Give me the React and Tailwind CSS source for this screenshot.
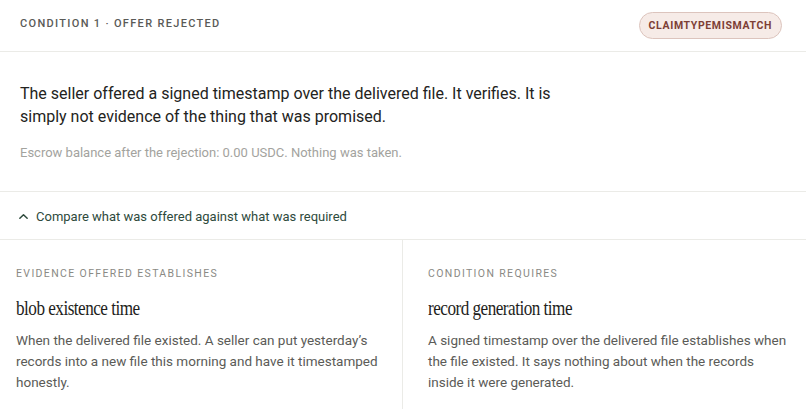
import React from 'react'

const sans = { fontFamily: 'Roboto, "Liberation Sans", sans-serif' }

function Column({ label, title, children, className = '' }) {
  return (
    <div className={`px-4 pt-[26px] pb-5 ${className}`}>
      <p className="text-[10.5px] uppercase tracking-[0.13em] text-[#8a8a85]">{label}</p>
      <h3 className="mt-[12px] whitespace-nowrap font-['Liberation_Serif',serif] text-[22px] leading-[27px] tracking-[-0.03em] text-[#1e1e1c]" style={{ transform: 'scaleX(0.78)', transformOrigin: 'left' }}>
        {title}
      </h3>
      <p className="mt-[9px] text-[13.5px] leading-[21px] text-[#5b5b57]">{children}</p>
    </div>
  )
}

export default function App() {
  return (
    <div className="w-[806px] h-[409px] overflow-hidden bg-white" style={sans}>
      <div className="flex h-[52px] items-center justify-between border-b border-[#ebebe7] pl-5 pr-[24px]">
        <span className="-mt-[2px] text-[11px] font-medium uppercase tracking-[0.12em] text-[#5a5a57]">Condition 1 · Offer rejected</span>
        <span className="rounded-full border border-[#dcc4bd] bg-[#f6ebe7] px-[9px] py-[5px] text-[10.5px] font-bold uppercase tracking-[0.06em] text-[#7d3f36]">
          ClaimTypeMismatch
        </span>
      </div>

      <div className="border-b border-[#ebebe7] px-5 pt-[30px] pb-[29px]">
        <p className="max-w-[545px] text-[16px] leading-[23px] text-[#232321]">
          The seller offered a signed timestamp over the delivered file. It verifies. It is simply not evidence of the thing that was promised.
        </p>
        <p className="mt-[16px] text-[13px] leading-[18px] text-[#a3a39e]">
          Escrow balance after the rejection: 0.00 USDC. Nothing was taken.
        </p>
      </div>

      <div className="flex h-[48px] items-center gap-[7px] border-b border-[#ebebe7] px-[18px] pt-[2px] text-[13px] text-[#2e4a3c]">
        <svg width="11" height="11" viewBox="0 0 12 12" fill="none" stroke="currentColor" strokeWidth="1.6" strokeLinecap="round" strokeLinejoin="round">
          <path d="M2 8l4-4 4 4" />
        </svg>
        <span>Compare what was offered against what was required</span>
      </div>

      <div className="grid grid-cols-2">
        <Column label="Evidence offered establishes" title="blob existence time" className="border-r border-[#ebebe7]">
          When the delivered file existed. A seller can put yesterday’s records into a new file this morning and have it timestamped honestly.
        </Column>
        <Column label="Condition requires" title="record generation time" className="pl-[25px]">
          A signed timestamp over the delivered file establishes when the file existed. It says nothing about when the records inside it were generated.
        </Column>
      </div>
    </div>
  )
}
